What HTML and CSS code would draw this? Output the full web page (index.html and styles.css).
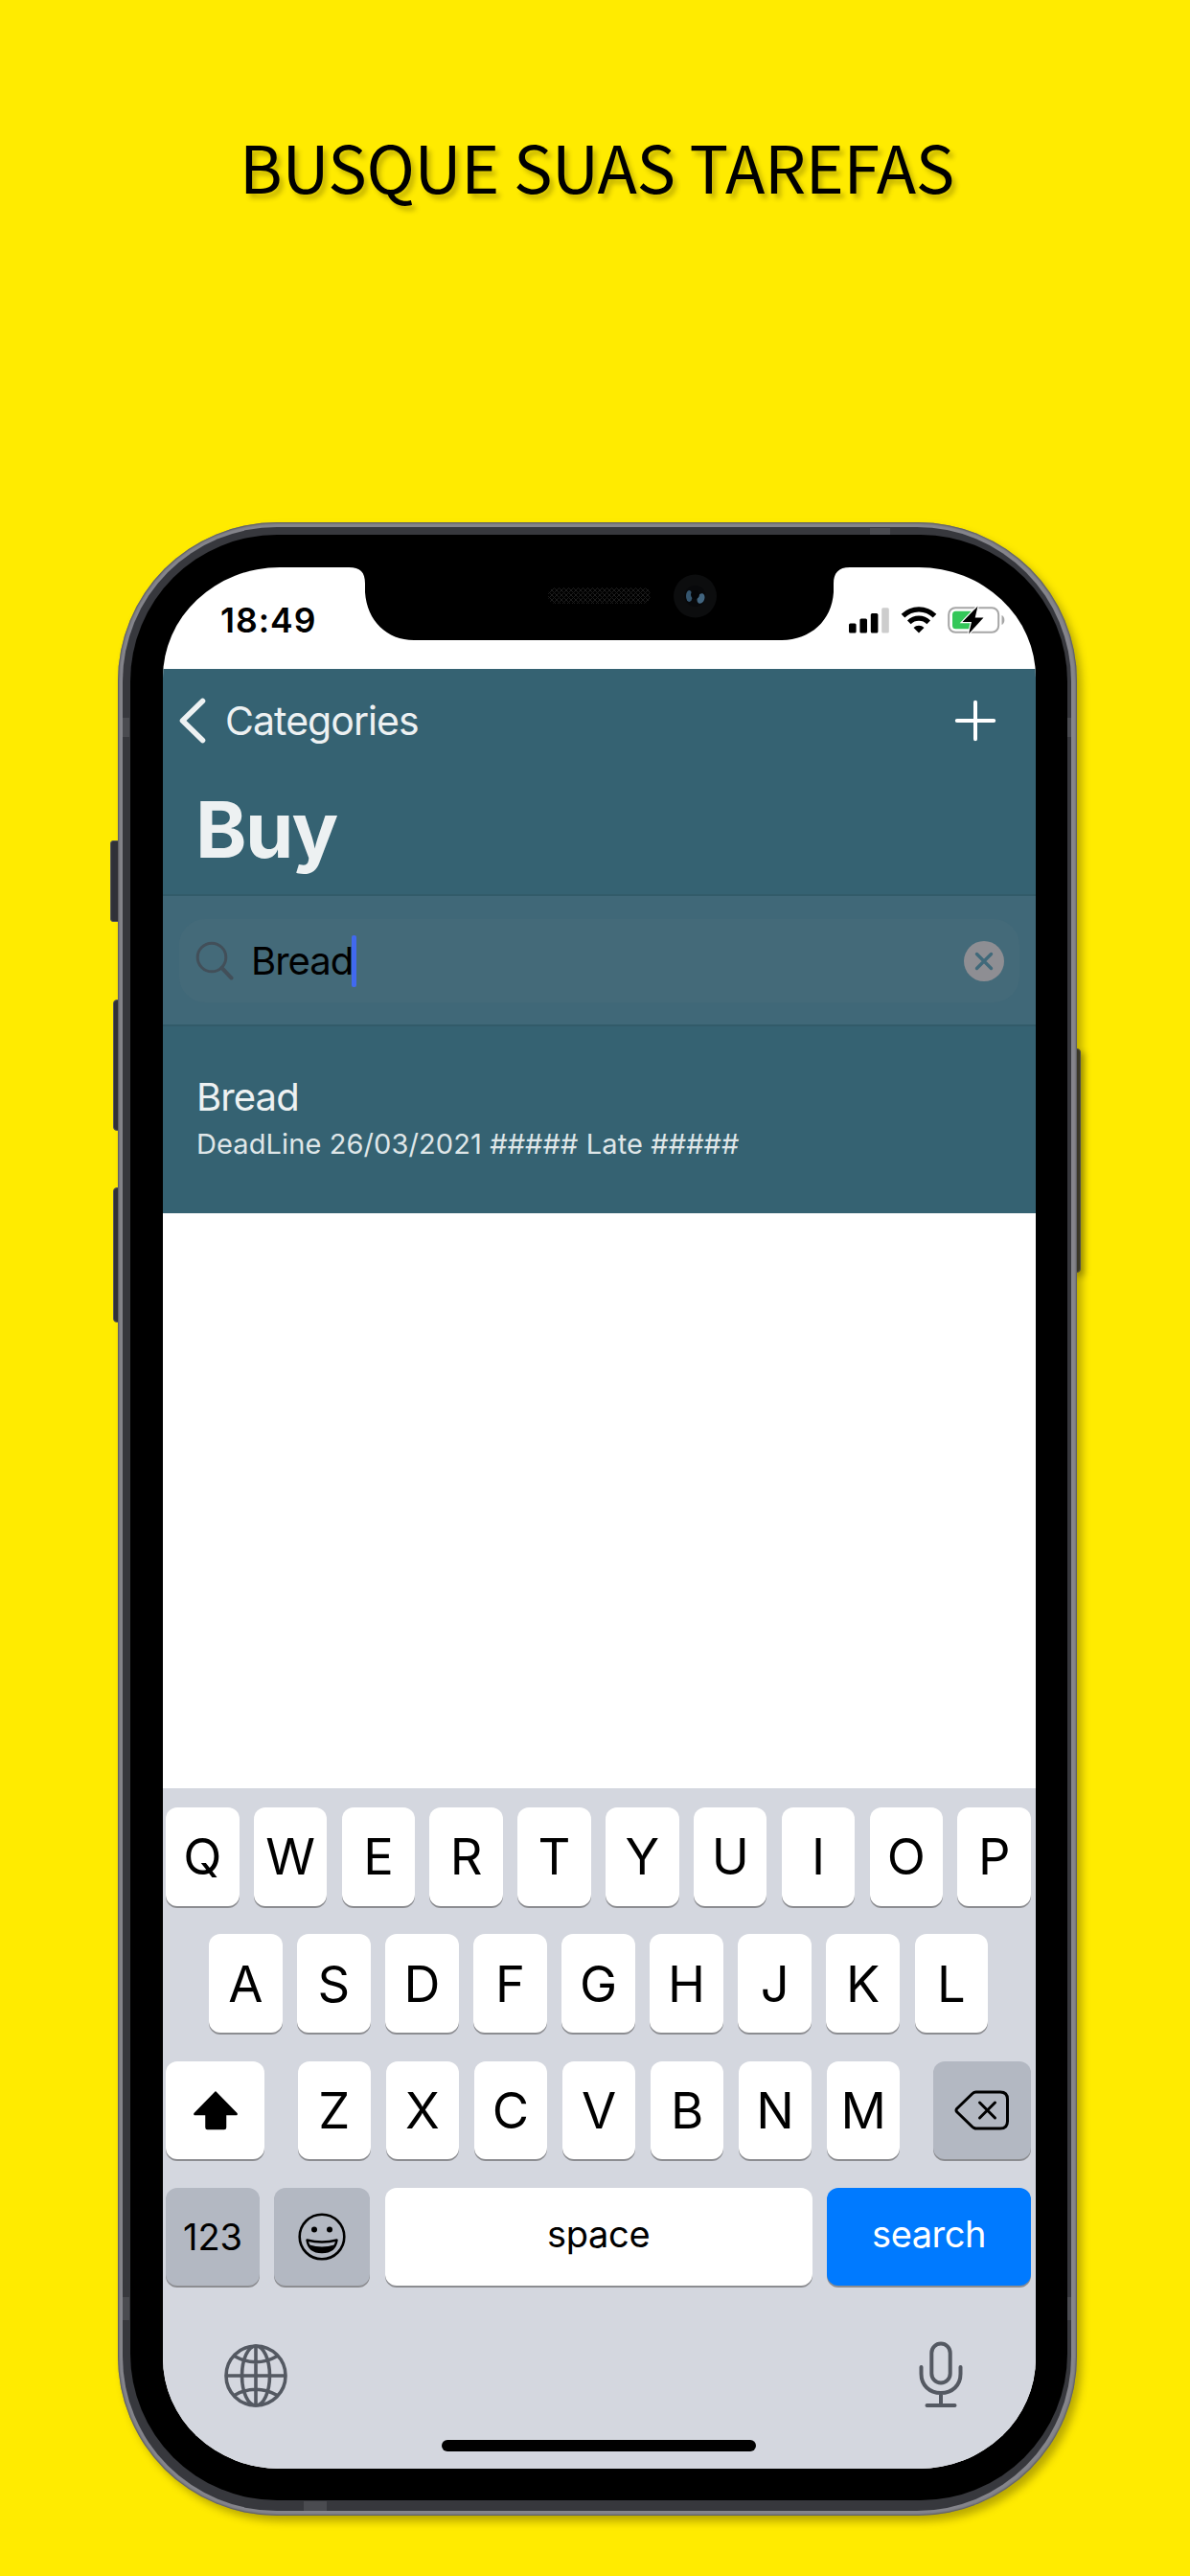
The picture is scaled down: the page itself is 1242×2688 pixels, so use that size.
FILE: index.html
```html
<!DOCTYPE html>
<html lang="pt-BR">
<head>
<meta charset="utf-8">
<title>Busque suas tarefas</title>
<link rel="stylesheet" href="styles.css">
</head>
<body>
<h1 class="headline"><span class="headline-text">BUSQUE SUAS TAREFAS</span></h1>
<main class="device">
  <i class="side side-mute"></i><i class="side side-up"></i><i class="side side-down"></i><i class="side side-power"></i>
  <div class="rim">
    <i class="band band-top"></i><i class="band band-bottom"></i><i class="band band-left-a"></i><i class="band band-left-b"></i>
    <i class="band band-right-a"></i><i class="band band-right-b"></i>
    <div class="bezel">
      <div class="screen">
        <header class="status">
          <span class="clock">18:49</span>
          <svg class="signal" viewBox="0 0 42 27" width="42" height="27">
            <rect x="0" y="16.5" width="7.6" height="10" rx="1.5"/><rect x="11.4" y="11.5" width="7.6" height="15" rx="1.5"/>
            <rect x="22.8" y="6" width="7.6" height="20.500" rx="1.5"/><rect x="34.2" y="0.300" width="7.6" height="26.200" rx="1.5" fill="#cdcdcd"/>
          </svg>
          <svg class="wifi" viewBox="0 0 38 28" width="38" height="28">
            <g fill="none" stroke="#000" stroke-width="5.200"><path d="M2.500 9.700a23.500 23.500 0 0 1 33 0"/><path d="M8.800 16.300a14.500 14.500 0 0 1 20.400 0"/></g>
            <path d="M19 27.500L13.500 22a7.800 7.800 0 0 1 11 0z"/>
          </svg>
          <svg class="battery" viewBox="0 0 61 30" width="61" height="30">
            <rect x="1.200" y="2.200" width="52" height="25.600" rx="7" fill="#fff" stroke="#a6a6a6" stroke-width="2"/>
            <path d="M56.500 10c3.800 1.300 3.800 8.700 0 10z" fill="#a6a6a6"/>
            <rect x="5" y="5.700" width="22" height="18.600" rx="3.500" fill="#34c759"/>
            <path d="M31.500.500L15.500 17h9.500l-3 12.500L37.500 12.500H28.700z" fill="#000" stroke="#fff" stroke-width="2.400" paint-order="stroke"/>
          </svg>
        </header>
        <nav class="nav">
          <svg class="back" viewBox="0 0 28 48" width="28" height="48"><path d="M24.500 3.500L3.500 24l21 20.500" fill="none" stroke="#edf1f2" stroke-width="5.600" stroke-linecap="round" stroke-linejoin="round"/></svg>
          <span class="back-label">Categories</span>
          <svg class="plus" viewBox="0 0 44 44" width="44" height="44"><path d="M22 2.800v38.400M2.800 22h38.400" stroke="#fff" stroke-width="4" stroke-linecap="round"/></svg>
        </nav>
        <h2 class="title"><span>Buy</span></h2>
        <section class="searchbar">
          <div class="field">
            <svg class="lens" viewBox="0 0 42 42" width="42" height="42"><circle cx="17" cy="17" r="14.800" fill="none" stroke="#424f59" stroke-width="3"/><path d="M27.500 28L37.500 38.500" stroke="#424f59" stroke-width="4" stroke-linecap="round"/></svg>
            <span class="query">Bread</span><i class="caret"></i>
            <svg class="clear" viewBox="0 0 42 42" width="42" height="42"><circle cx="21" cy="21" r="21" fill="#8e8e93"/><path d="M13.500 13.500l15 15M28.500 13.500l-15 15" stroke="#40697a" stroke-width="3.400" stroke-linecap="round"/></svg>
          </div>
        </section>
        <article class="task">
          <p class="task-name"><span>Bread</span></p>
          <p class="task-due"><span>DeadLine 26/03/2021 ##### Late #####</span></p>
        </article>
        <div class="blank"></div>
        <section class="keyboard">
          <div class="row"><b>Q</b><b>W</b><b>E</b><b>R</b><b>T</b><b>Y</b><b>U</b><b>I</b><b>O</b><b>P</b></div>
          <div class="row row-mid"><b>A</b><b>S</b><b>D</b><b>F</b><b>G</b><b>H</b><b>J</b><b>K</b><b>L</b></div>
          <div class="row">
            <b class="shift"><svg viewBox="0 0 48 42" width="48" height="42"><path d="M24 2L46 24.500v1H34.500V39a1.500 1.500 0 0 1-1.500 1.500H15.500A1.500 1.500 0 0 1 14 39V25.500H2v-1z" stroke="#000" stroke-width="1.500" stroke-linejoin="round"/></svg></b>
            <b>Z</b><b>X</b><b>C</b><b>V</b><b>B</b><b>N</b><b>M</b>
            <b class="erase"><svg viewBox="0 0 58 42" width="58" height="42" fill="none" stroke="#000" stroke-width="3" stroke-linecap="round" stroke-linejoin="round"><path d="M22.500 2H48q7.500 0 7.500 7.500v23Q55.500 40 48 40H22.500Q20.500 40 18.500 38L2.500 22.500Q1.500 21 2.500 19.500L18.500 4Q20.500 2 22.500 2z"/><path d="M26.500 13l16 16M42.500 13l-16 16"/></svg></b>
          </div>
          <div class="row row-last">
            <b class="mode"><span>123</span></b>
            <b class="emoji"><svg viewBox="0 0 50 50" width="50" height="50"><circle cx="25" cy="25" r="23.300" fill="none" stroke="#000" stroke-width="2.600"/><circle cx="17" cy="17.500" r="3"/><circle cx="33" cy="17.500" r="3"/><path d="M9.500 28.500Q25 32.500 40.500 28.500 38.500 41 25 41T9.500 28.500z" fill="none" stroke="#000" stroke-width="2.400" stroke-linejoin="round"/><path d="M12 33.500q13 4 26 0Q34 41 25 41T12 33.500z"/></svg></b>
            <b class="space"><span>space</span></b>
            <b class="go"><span>search</span></b>
          </div>
          <div class="tools">
            <svg class="globe" viewBox="0 0 66 66" width="66" height="66" fill="none" stroke="#545962" stroke-width="3.600"><circle cx="33" cy="33" r="31"/><ellipse cx="33" cy="33" rx="14.500" ry="31"/><path d="M33 2v62M2 33h62M10.500 12.500Q33 25 55.500 12.500M10.500 53.500Q33 41 55.500 53.500"/></svg>
            <svg class="mic" viewBox="0 0 48 70" width="48" height="70" fill="none" stroke="#545962" stroke-width="4" stroke-linecap="round"><rect x="14.300" y="2.500" width="19.400" height="41" rx="9.700"/><path d="M3.500 27v7C3.500 46 12 54 24 54S44.500 46 44.500 34v-7M24 54v13M9.500 67h29"/></svg>
          </div>
          <i class="home"></i>
        </section>
      </div>
      <svg class="notch" viewBox="0 0 540 78" width="540" height="78">
        <defs><pattern id="mesh" width="5" height="5" patternUnits="userSpaceOnUse"><path d="M0 0l5 5M5 0L0 5" stroke="#1d1d1d" stroke-width="1"/></pattern></defs>
        <path d="M8 0V1C20 1 25 6 25 18V27C27 57 48 77 76 77H460C490 76.500 512 57 514 27V18C514 7 519 1 531 1V0z"/>
        <rect x="216" y="22" width="107" height="17" rx="8" fill="url(#mesh)"/>
        <circle cx="369.500" cy="31" r="22.500" fill="#0c0d0e"/><circle cx="369.500" cy="31" r="11" fill="#08090b"/>
        <ellipse cx="363.300" cy="31" rx="3.300" ry="6" fill="#35566f"/><ellipse cx="375.500" cy="33.500" rx="3.800" ry="5.500" fill="#42657f" transform="rotate(20 375.500 33.500)"/>
        <circle cx="369.500" cy="29.500" r="4.500" fill="#050608"/>
      </svg>
    </div>
  </div>
</main>
</body>
</html>
```
FILE: styles.css
```css
* { box-sizing: border-box; margin: 0; padding: 0; }
body { width: 1242px; height: 2688px; overflow: hidden; background: #ffeb00; font-family: Inter, "Liberation Sans", sans-serif; color: #000; }
.headline { height: 545px; padding: 123px 0 0 4px; text-align: center; font: 400 68px/100px "Noto Sans CJK SC", "Noto Sans", sans-serif; letter-spacing: -.35px; text-shadow: 4px 5px 5px rgba(70, 60, 0, .3); }
.device { position: relative; width: 1001px; height: 2080px; margin-left: 123px; padding: 5px 6px 5px 5px; border-radius: 166px; background: #85858b; box-shadow: inset 0 0 2px 1px #55555a, 5px 6px 8px rgba(80, 70, 0, .4); }
.side { position: absolute; background: #303139; border: 1px solid #55565c; z-index: -1; }
.side-mute { left: -8px; top: 332px; width: 12px; height: 85px; border-radius: 3px; }
.side-up { left: -5px; top: 498px; width: 10px; height: 137px; border-radius: 4px; }
.side-down { left: -5px; top: 694px; width: 10px; height: 141px; border-radius: 4px; }
.side-power { right: -4px; top: 549px; width: 10px; height: 234px; border-radius: 4px; box-shadow: 4px 4px 6px rgba(80, 70, 0, .4); }
.rim { position: relative; height: 2070px; padding: 8px 4px 11px 8px; border-radius: 161px; background: #37383d; }
.band { position: absolute; background: #4a4b50; }
.band-top { left: 780px; top: 1px; width: 21px; height: 7px; }
.band-bottom { left: 189px; bottom: 0; width: 24px; height: 10px; }
.band-left-a, .band-left-b { left: 0; width: 7px; height: 20px; top: 199px; }
.band-left-b { top: 1847px; height: 24px; }
.band-right-a, .band-right-b { right: 0; width: 4px; height: 20px; top: 199px; }
.band-right-b { top: 1847px; height: 24px; }
.bezel { position: relative; height: 2051px; padding: 34px 33px 33px 34px; border-radius: 153px; background: #000; }
.screen { display: flex; flex-direction: column; height: 1984px; overflow: hidden; border-radius: 122px / 115px; background: #fff; }
.notch { position: absolute; left: 220px; top: 33px; }

.status { display: flex; align-items: flex-start; height: 106px; padding: 41px 31px 0 60px; flex: none; }
.clock { flex: 1; font-size: 35.500px; font-weight: 600; line-height: 29px; letter-spacing: 1px; }
.signal { margin-top: 1px; }
.wifi { margin: 0 11px 0 12px; }
.battery { margin-top: -1px; }

.nav { display: flex; align-items: center; flex: none; height: 108px; padding: 0 41px 0 17px; background: #356272; color: #edf1f2; }
.back-label { flex: 1; margin-left: 20px; font-size: 41px; letter-spacing: -.950px; }
.title { flex: none; height: 127px; padding: 11px 0 0 34px; background: #356272; color: #edf1f2; font-size: 81px; line-height: 98px; font-weight: 700; letter-spacing: -1.700px; }

.searchbar { flex: none; height: 138px; padding: 24px 17px; border-top: 2px solid #325b69; border-bottom: 2px solid #325b69; background: #406878; }
.field { display: flex; align-items: center; height: 87px; padding: 0 16px 0 17px; border-radius: 27px; background: #446a79; }
.query { margin-left: 16px; font-size: 40px; letter-spacing: -1px; }
.caret { width: 5px; height: 54px; margin-left: -1px; border-radius: 2px; background: #4169f0; }
.clear { margin-left: auto; }

.task { flex: none; height: 195px; padding: 49px 0 0 35px; background: #356272; color: #edf1f2; }
.task-name { height: 50px; font-size: 40px; line-height: 50px; letter-spacing: -.900px; }
.task-due { height: 50px; font-size: 29px; line-height: 48px; letter-spacing: .100px; color: #dfe6e8; }
.blank { flex: 1; }

.keyboard { flex: none; height: 710px; padding: 20px 5px 18px 3px; background: #d4d7df; }
.row { display: flex; justify-content: space-between; height: 102px; margin-bottom: 30.300px; }
.row b { display: flex; align-items: center; justify-content: center; width: 76.500px; height: 102.500px; border-radius: 12px; background: #fff; box-shadow: 0 2px 0 #8c8d91; font-size: 52.500px; font-weight: 400; }
.row-mid { padding: 0 45px; }
.row .shift { width: 103px; margin-right: 19px; }
.row .erase { width: 102px; margin-left: 19px; background: #b3b8c2; }
.row-last { gap: 15px; }
.row .mode { width: 98px; background: #b3b8c2; font-size: 38px; }
.row .emoji { width: 100px; background: #b3b8c2; }
.row .space { width: 446px; font-size: 38px; letter-spacing: -.300px; padding-bottom: 6px; }
.row .go { width: 213px; background: #007aff; color: #fff; font-size: 38px; letter-spacing: -.500px; padding-bottom: 6px; }
.tools { display: flex; justify-content: space-between; padding: 28px 70px 0 61px; height: 131px; }
.globe { margin-top: 3px; }
.home { display: block; width: 328px; height: 12px; margin: 0 auto; border-radius: 6px; background: #000; }
```
